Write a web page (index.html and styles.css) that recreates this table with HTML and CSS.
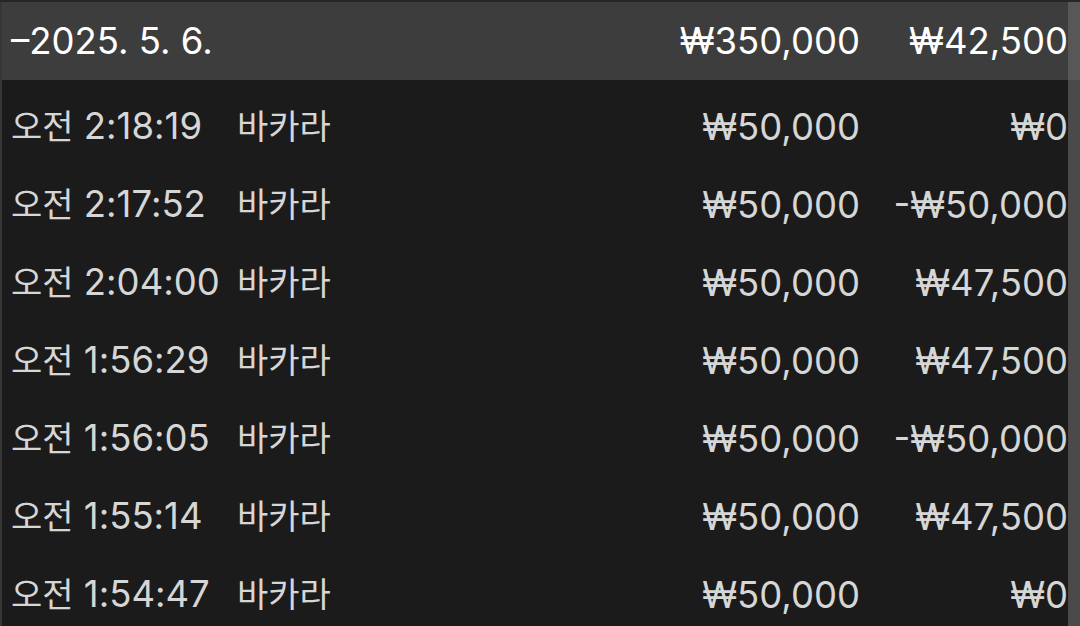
FILE: index.html
```html
<!DOCTYPE html>
<html lang="ko">
<head>
<meta charset="utf-8">
<link rel="stylesheet" href="styles.css">
</head>
<body>
<div class="screen">
  <div class="list">
    <div class="row head">
      <span class="time">–2025. 5. 6.</span>
      <span class="game"></span>
      <span class="bet">₩350,000</span>
      <span class="result">₩42,500</span>
    </div>
    <div class="rows">
      <div class="row"><span class="time"><span class="ko">오전</span> 2:18:19</span><span class="game ko">바카라</span><span class="bet">₩50,000</span><span class="result">₩0</span></div>
      <div class="row"><span class="time"><span class="ko">오전</span> 2:17:52</span><span class="game ko">바카라</span><span class="bet">₩50,000</span><span class="result">-₩50,000</span></div>
      <div class="row"><span class="time"><span class="ko">오전</span> 2:04:00</span><span class="game ko">바카라</span><span class="bet">₩50,000</span><span class="result">₩47,500</span></div>
      <div class="row"><span class="time"><span class="ko">오전</span> 1:56:29</span><span class="game ko">바카라</span><span class="bet">₩50,000</span><span class="result">₩47,500</span></div>
      <div class="row"><span class="time"><span class="ko">오전</span> 1:56:05</span><span class="game ko">바카라</span><span class="bet">₩50,000</span><span class="result">-₩50,000</span></div>
      <div class="row"><span class="time"><span class="ko">오전</span> 1:55:14</span><span class="game ko">바카라</span><span class="bet">₩50,000</span><span class="result">₩47,500</span></div>
      <div class="row"><span class="time"><span class="ko">오전</span> 1:54:47</span><span class="game ko">바카라</span><span class="bet">₩50,000</span><span class="result">₩0</span></div>
    </div>
  </div>
  <div class="scrollbar">
    <div class="scroll-top"></div>
    <div class="scroll-rest"></div>
  </div>
</div>
</body>
</html>
```
FILE: styles.css
```css
html, body {
  margin: 0;
  padding: 0;
  background: #1b1b1b;
}
body {
  width: 1080px;
  height: 626px;
  overflow: hidden;
  font-family: "Inter", "Noto Sans CJK KR", sans-serif;
  font-size: 36.5px;
}
.screen {
  display: flex;
  height: 626px;
  border-top: 2px solid #262626;
  box-sizing: border-box;
}
.list {
  flex: 1;
  border-left: 2px solid #363636;
  display: flex;
  flex-direction: column;
}
.row {
  display: grid;
  grid-template-columns: 226px 1fr 240px 208px;
  height: 78px;
  flex-shrink: 0;
  align-items: center;
  color: #d6d6d6;
  padding-left: 9px;
  line-height: 78px;
}
.head {
  background: #3d3d3d;
  color: #ffffff;
}
.rows {
  padding-top: 7px;
  flex-shrink: 0;
}
.ko {
  font-size: 34px;
}
.time, .game {
  white-space: nowrap;
}
.bet, .result {
  text-align: right;
  white-space: nowrap;
}
.scrollbar {
  width: 12px;
  display: flex;
  flex-direction: column;
}
.scroll-top {
  height: 78px;
  background: #575757;
}
.scroll-rest {
  flex: 1;
  background: #4a4a4a;
}
```
